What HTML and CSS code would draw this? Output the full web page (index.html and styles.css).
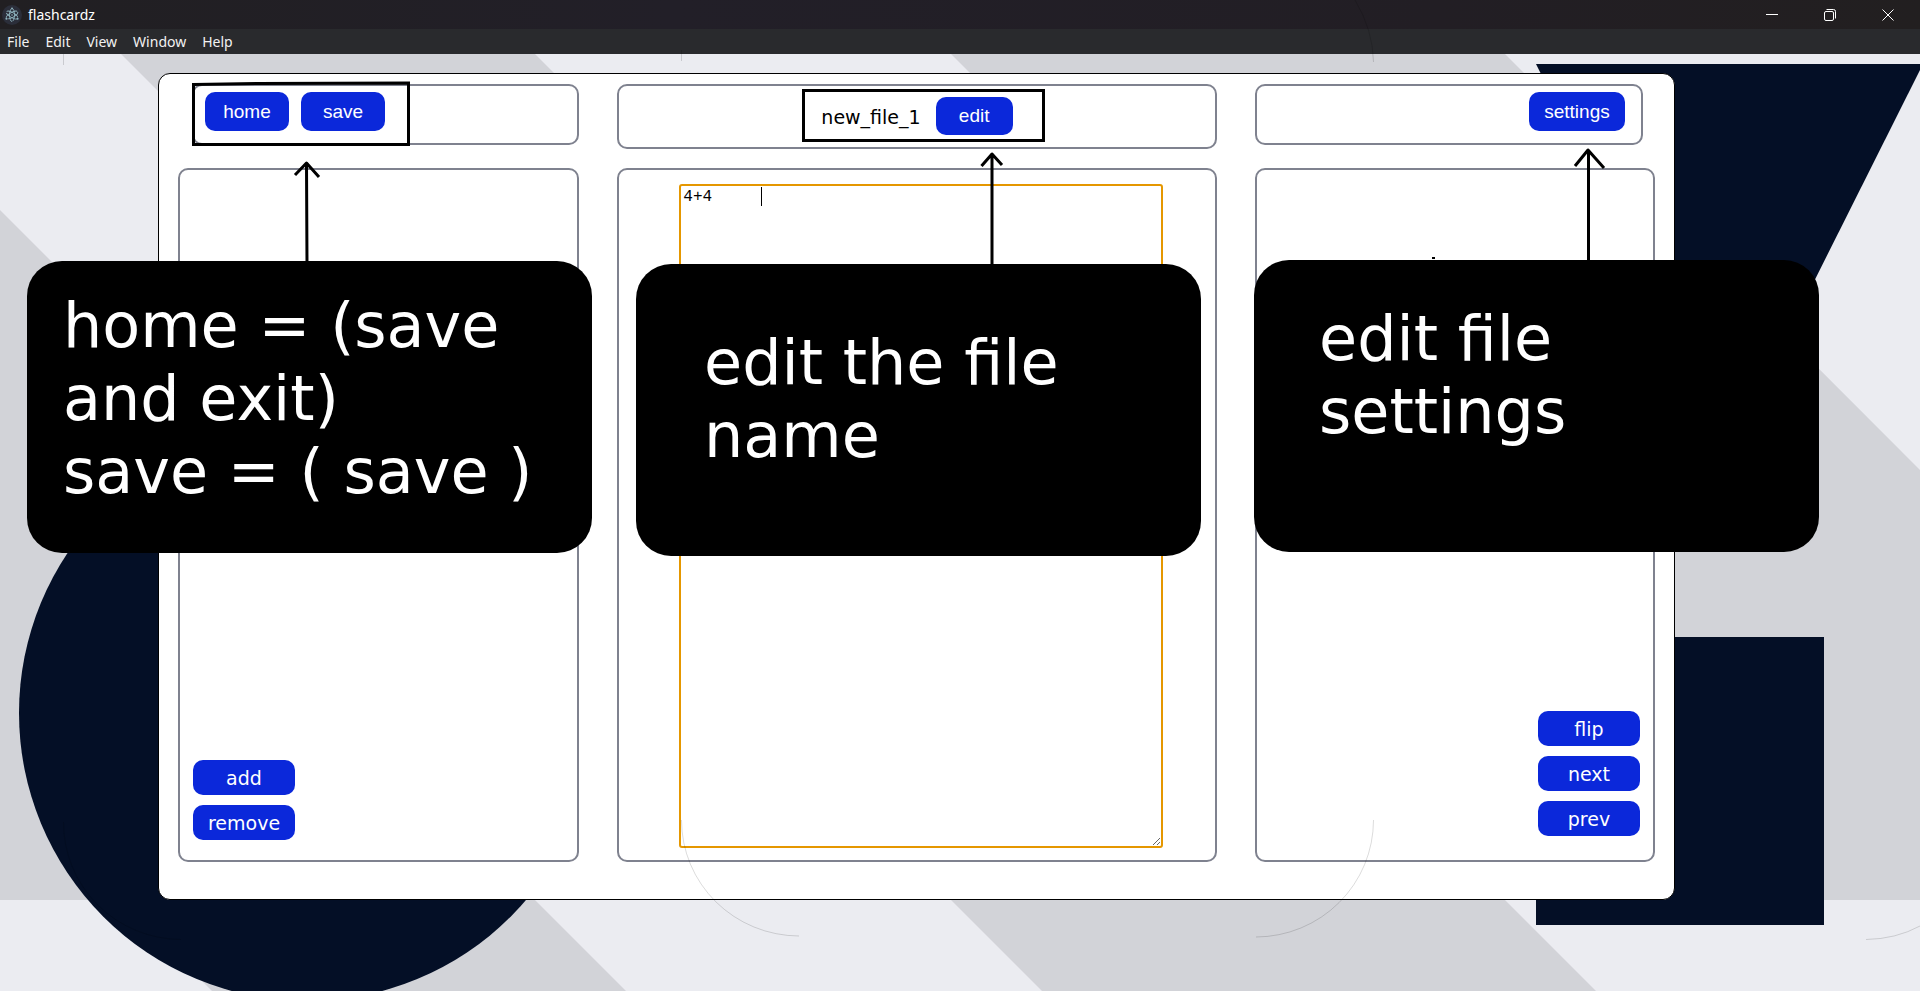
FILE: index.html
```html
<!DOCTYPE html>
<html lang="en">
<head>
<meta charset="utf-8">
<title>flashcardz</title>
<link rel="stylesheet" href="styles.css">
</head>
<body class="window">
<svg class="backdrop" viewBox="0 0 1920 991" preserveAspectRatio="xMinYMin slice" aria-hidden="true">
  <rect width="1920" height="991" fill="#d2d3d8"/>
  <g fill="#ebecf1">
    <path d="M0 54H121L427 360L277 487L0 210Z"/>
    <path d="M535 54H951L1797 900H1381Z"/>
    <path d="M1505 54H1920V470Z"/>
    <path d="M0 900H121L212 991H0Z"/>
    <path d="M535 900H951L1042 991H626Z"/>
    <path d="M1505 900H1920V991H1596Z"/>
  </g>
  <g fill="#040f26">
    <circle cx="307" cy="713" r="288"/>
    <path d="M1536 64H1923L1729 451Z"/>
    <rect x="1536" y="637" width="288" height="288"/>
  </g>
</svg>

<header class="titlebar">
  <svg class="app-icon" width="20" height="20" viewBox="0 0 20 20" aria-hidden="true">
    <circle cx="10" cy="10" r="10" fill="#2b2e3a"/>
    <g fill="none" stroke="#8fb3be" stroke-width="0.9" stroke-dasharray="13 2">
      <ellipse cx="10" cy="10" rx="6.500" ry="2.500" transform="rotate(30 10 10)"/>
      <ellipse cx="10" cy="10" rx="6.500" ry="2.500" transform="rotate(-30 10 10)"/>
      <ellipse cx="10" cy="10" rx="6.500" ry="2.500" transform="rotate(90 10 10)"/>
    </g>
    <g fill="#8fb3be"><circle cx="10" cy="10" r=".8"/><circle cx="4.4" cy="13.7" r="1"/><circle cx="15.6" cy="13.7" r="1"/><circle cx="10" cy="3.4" r="1"/></g>
  </svg>
  <span class="app-title">flashcardz</span>
  <div class="window-controls">
    <button class="window-control" aria-label="Minimize"><svg width="12" height="12" viewBox="0 0 12 12"><path d="M0 5.500H12"/></svg></button>
    <button class="window-control" aria-label="Restore"><svg width="12" height="12" viewBox="0 0 12 12"><rect x=".5" y="2.500" width="9" height="9" rx="1.500"/><path d="M2.500 .5H9.500Q11.500 .5 11.500 2.500V9.500"/></svg></button>
    <button class="window-control" aria-label="Close"><svg width="12" height="12" viewBox="0 0 12 12"><path d="M.5 .5L11.500 11.500M11.500 .5L.5 11.500"/></svg></button>
  </div>
</header>
<nav class="menubar">
  <button class="menu">File</button>
  <button class="menu">Edit</button>
  <button class="menu">View</button>
  <button class="menu">Window</button>
  <button class="menu">Help</button>
</nav>

<main class="card">
  <section class="panel bar bar-left">
    <button class="btn btn-top">home</button>
    <button class="btn btn-top">save</button>
  </section>
  <section class="panel bar bar-middle">
    <span class="file-name">new_file_1</span>
    <button class="btn btn-edit">edit</button>
  </section>
  <section class="panel bar bar-right">
    <button class="btn btn-top btn-settings">settings</button>
  </section>
  <section class="panel side side-left">
    <button class="btn btn-side">add</button>
    <button class="btn btn-side">remove</button>
  </section>
  <section class="panel editor">
    <div class="editor-field">
      <textarea class="editor-text" aria-label="Card text">4+4	</textarea>
      <span class="caret"></span>
    </div>
  </section>
  <section class="panel side side-right">
    <button class="btn btn-side">flip</button>
    <button class="btn btn-side">next</button>
    <button class="btn btn-side">prev</button>
  </section>
</main>

<svg class="marks" width="1920" height="991" viewBox="0 0 1920 991" aria-hidden="true">
  <g fill="none" stroke="#000" stroke-opacity=".14">
    <path d="M63.500 54V65M681.500 50V61M1355 0Q1373 30 1373.500 62"/>
    <path d="M681.500 820A118 116 0 0 0 799 936M1373.500 820A118 117 0 0 1 1256 937"/>
    <path d="M63.500 822A118 117 0 0 0 181 939.500M1866 939.500Q1896 939 1920 926"/>
  </g>
  <g fill="none" stroke="#000" stroke-width="3">
    <path d="M193.500 84.500L258 83.500L408.500 83V144.500H193.500Z"/>
    <path d="M803.500 90.500H1043.500V140.500H803.500Z"/>
    <g stroke-linejoin="round">
      <path d="M307 264L306.500 163M295 175L306.500 163L319 177"/>
      <path d="M992 267V154M981.500 166L992 154L1002 165"/>
      <path d="M1588.500 262V150M1575 166L1588 150L1604 168"/>
    </g>
  </g>
  <rect x="1432" y="257" width="3" height="2"/>
</svg>
<p class="callout callout-left">home = (save<br>and exit)<br>save = ( save )</p>
<p class="callout callout-middle">edit the file<br>name</p>
<p class="callout callout-right">edit file<br>settings</p>
</body>
</html>
```
FILE: styles.css
```css
* {
  box-sizing: border-box;
}

.window {
  position: relative;
  display: flex;
  flex-direction: column;
  min-height: 100vh;
  margin: 0;
  overflow: hidden;
  font-family: "DejaVu Sans", Verdana, sans-serif;
}

button {
  padding: 0;
  border: 0;
  background: none;
  color: inherit;
  font: inherit;
}

.backdrop {
  position: absolute;
  inset: 0;
  z-index: -1;
  width: 100%;
  height: 100%;
}

.titlebar {
  display: flex;
  align-items: center;
  height: 29px;
  padding-left: 2px;
  background: linear-gradient(90deg, #211f22, #221f28 35%, #221e24 75%, #221f20);
  color: #fff;
  font: 14px/20px "Noto Sans", sans-serif;
}

.app-title {
  margin-left: 6px;
}

.window-controls {
  display: flex;
  margin-left: auto;
  padding-right: 3px;
}

.window-control {
  display: flex;
  align-items: center;
  justify-content: center;
  width: 58px;
  height: 28px;
}

.window-control svg {
  fill: none;
  stroke: #fff;
}

.menubar {
  display: flex;
  gap: 16px;
  height: 25px;
  padding-left: 7px;
  background: #292a2d;
  color: #f2f2f2;
  font: 14px/24px "Noto Sans", sans-serif;
}

.card {
  flex: 1;
  display: grid;
  grid-template: auto 1fr / 401fr 599fr 400fr;
  gap: 19px 38px;
  margin: 19px 245px 91px 158px;
  padding: 10px 19px 37px;
  border: 1px solid #000;
  border-radius: 12px;
  background: #fff;
}

.panel {
  display: flex;
  border: 2px solid #7f828f;
  border-radius: 10px;
}

.bar {
  align-self: start;
}

.bar-left {
  gap: 12px;
  margin-left: 14px;
  padding: 6px 11px 12px;
}

.bar-middle {
  align-items: center;
  justify-content: center;
  gap: 15px;
  padding: 11px 11px 12px;
}

.bar-right {
  justify-content: flex-end;
  margin-right: 12px;
  padding: 6px 16px 12px;
}

.file-name {
  padding-top: 2px;
  font-size: 19px;
}

.btn {
  border-radius: 10px;
  background: #0b28da;
  color: #fff;
  font-size: 19px;
}

.btn-top {
  width: 84px;
  height: 39px;
  font-family: "Liberation Sans", Arial, sans-serif;
}

.btn-settings {
  width: 96px;
}

.btn-edit {
  width: 77px;
  height: 38px;
  font-family: "Liberation Sans", Arial, sans-serif;
}

.side {
  flex-direction: column;
  justify-content: flex-end;
  gap: 10px;
}

.side-left {
  align-items: flex-start;
  padding: 0 13px 20px;
}

.side-right {
  align-items: flex-end;
  padding: 0 13px 24px;
}

.btn-side {
  width: 102px;
  height: 35px;
}

.editor {
  padding: 14px 52px 12px 60px;
}

.editor-field {
  position: relative;
  display: flex;
  flex: 1;
}

.editor-text {
  flex: 1;
  min-width: 0;
  margin: 0;
  padding: 1px 2px;
  border: 2px solid #e59700;
  border-radius: 3px;
  outline: 0;
  background: #fff;
  color: #000;
  font: 16px/20px "Liberation Mono", "Courier New", monospace;
}

.caret {
  position: absolute;
  top: 3px;
  left: 82px;
  width: 1px;
  height: 19px;
  background: #000;
}

.marks {
  position: absolute;
  top: 0;
  left: 0;
  pointer-events: none;
}

.callout {
  position: absolute;
  width: 565px;
  height: 292px;
  margin: 0;
  border-radius: 35px;
  background: #000;
  color: #fff;
  font-size: 62px;
  line-height: 73px;
}

.callout-left {
  top: 261px;
  left: 27px;
  padding: 28px 0 0 36px;
}

.callout-middle {
  top: 264px;
  left: 636px;
  padding: 62px 0 0 68px;
}

.callout-right {
  top: 260px;
  left: 1254px;
  padding: 42px 0 0 65px;
}
```
